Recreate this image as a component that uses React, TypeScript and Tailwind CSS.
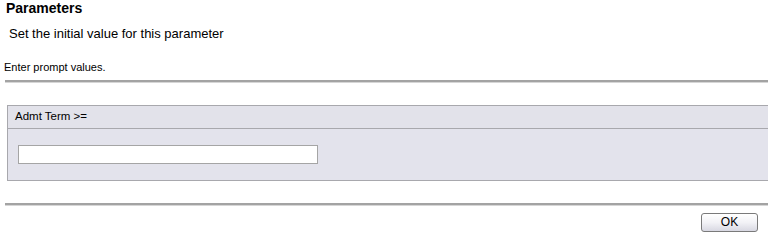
import React from "react";

export default function App() {
  return (
    <div className="w-[768px] h-[238px] bg-white text-black overflow-hidden font-['Liberation_Sans',Arial,sans-serif]">
      <div className="pl-[6px] text-[14px] font-bold leading-[16px]">Parameters</div>
      <div className="pl-[9px] mt-[10px] text-[13px] leading-[16px]">Set the initial value for this parameter</div>
      <div className="pl-[4px] mt-[19px] text-[11px] leading-[13px]">Enter prompt values.</div>
      <div className="ml-[5px] mt-[6px] h-[2px] bg-[#a3a3a3] border-b border-[#d6d6d6] box-content" />
      <div className="ml-[7px] mt-[22px] border border-r-0 border-[#a8a8ad] bg-[#e3e3ec]">
        <div className="h-[23px] pl-[7px] flex items-center text-[11.5px] bg-[#e2e2ea] border-b border-[#a8a8ad]">
          Admt Term &gt;=
        </div>
        <div className="pt-[16px] pb-[16px] pl-[10px]">
          <div className="w-[300px] h-[19px] bg-white border border-[#a5a5a5]" />
        </div>
      </div>
      <div className="ml-[5px] mt-[22px] h-[2px] bg-[#a3a3a3] border-b border-[#d6d6d6] box-content" />
      <div className="flex justify-end pr-[10px] mt-[7px]">
        <button className="w-[57px] h-[19px] rounded-[3px] border border-[#7a7a7a] bg-gradient-to-b from-white via-[#f2f2f6] to-[#d8d8e2] text-[12px] leading-[17px] text-center">
          OK
        </button>
      </div>
    </div>
  );
}
